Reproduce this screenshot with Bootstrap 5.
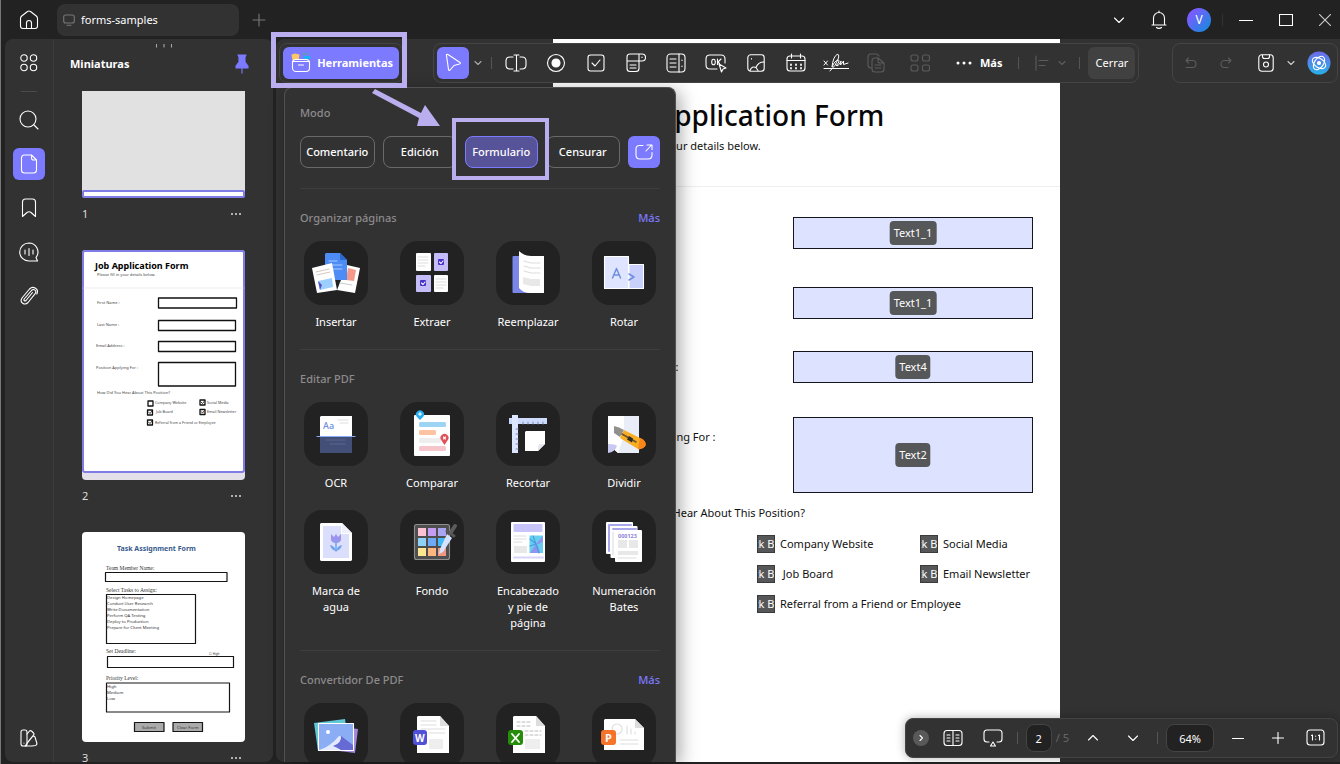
<!DOCTYPE html>
<html lang="es">
<head>
<meta charset="utf-8">
<meta name="viewport" content="width=device-width, initial-scale=1">
<title>forms-samples</title>
<link href="https://cdn.jsdelivr.net/npm/bootstrap@5.3.0/dist/css/bootstrap.min.css" rel="stylesheet">
<style>
:root{--ink:#222;--pane:#333233;--line:#454445;--violet:#7c7aff;--mark-line:#baaeef}
body{font-family:"Noto Sans","Open Sans",sans-serif;font-size:11px;line-height:16px;color:#fff;background:var(--ink)}
.app{height:100vh;padding:0 0 2px 4px;border-left:1px solid #777;overflow:hidden}
svg{display:block;fill:none;stroke:#fff;stroke-width:1.1;stroke-linecap:round;stroke-linejoin:round}
.tool{width:40px;height:32px;padding:0;border:0;border-radius:6px;display:flex;align-items:center;justify-content:center;flex:none;color:#fff;font-size:11px;line-height:16px}
.tool-s{width:18px}
.tool-xs{width:10px}
.tool-m{width:30px}
.tool-first{width:24px}
.tool-last{width:36px}
.tool-on,.tool-on:hover{background:var(--violet);width:32px}
.faint svg{stroke:#5c5c5c}
.vsep{width:1px;height:12px;background:#555;flex:none}
.vsep-win{margin:0 3px;background:#333}
.vsep-end{margin:0 8px 0 12px}
.titlebar{height:39px;flex:none}
.doc-tab{width:182px;height:32px;border-radius:8px;background:var(--pane);padding:0 6px;margin-left:8px;gap:6px}
.doc-tab svg,.plus svg{stroke:#777}
.avatar{width:24px;height:24px;border-radius:50%;background:linear-gradient(135deg,#7a5cff 20%,#1f86e0 85%);font-size:12px;line-height:24px;text-align:center}
.rail{width:49px;background:var(--pane);border-right:1px solid #3c3b3c;border-radius:8px 0 0 8px;padding:8px 0}
.rail .tool{width:32px}
.rail-line{width:16px;height:1px;background:#4b4b4b;margin:12px 0}
.rail .gap-top{margin-top:12px}
.thumbs{width:219px;background:var(--pane);border-radius:0 8px 8px 0;overflow:hidden;padding:0 28px}
.thumb-head{height:52px;margin:0 -12px;padding-bottom:3px}
.grip{left:101px;top:5px}
.thumb svg{width:163px;stroke:none}
.thumb-cap{height:52px;padding:8px 3px 0 0;color:#ddd}
.workspace{margin-left:3px}
.canvas{background:var(--pane);overflow:hidden;border-radius:8px 0 0 8px;padding-right:3px}
.sheet{width:507px;background:#fff;color:#111;padding:58px 27px 0 47px;min-height:100%}
.sheet h1{font-size:28px;line-height:36px;font-weight:500;margin:0 0 5px 6px;white-space:nowrap;color:#080808}
.sheet hr{margin:32px -27px 30px -47px;border-color:#bbb}
.frow{display:flex;align-items:flex-start;margin-bottom:34px}
.frow:nth-of-type(1){margin-bottom:38px}
.frow:nth-of-type(2){margin-bottom:32px}
.frow>label{padding-top:8px;white-space:nowrap}
.fbox{position:relative;width:240px;margin-left:auto}
.fbox input,.fbox textarea{display:block;width:100%;height:32px;border:1px solid #15151f;background:#dde2ff;resize:none}
.fbox textarea{height:76px}
.fchip{position:absolute;left:50%;top:50%;transform:translate(-50%,-50%);background:#565759;color:#fff;border-radius:4px;padding:4px;line-height:16px}
.ask{margin:-22px 0 14px 4px}
.checks{margin-left:157px;display:grid;grid-template-columns:163px 1fr;row-gap:12px}
.checks label{display:flex;align-items:center;white-space:nowrap;gap:5px}
.cbox{position:relative;flex:none;width:18px;height:18px;background:#565759;overflow:hidden;display:flex;justify-content:center;border:1px solid #3a3a3a;color:#fff}
.cbox span{flex:none;white-space:nowrap;margin-left:-12px}
.cbox input{position:absolute;inset:0;opacity:0}
.bars{top:4px;left:3px;right:2px}
.group{height:40px;border:1px solid var(--line);border-radius:8px;background:var(--pane);padding:0 3px}
.hot{position:relative}
.hot::before{content:"";position:absolute;inset:-15px -8px -9px -12px;border:5px solid var(--mark-line);pointer-events:none}
.btn-tools,.btn-tools:hover{width:116px;height:32px;border:0;border-radius:6px;background:var(--violet);color:#fff;font-size:11px;line-height:16px;font-weight:700;padding:0 6px 0 8px}
.btn-close-form,.btn-close-form:hover{width:47px;height:32px;padding:0;border:0;background:#424142;color:#fff;font-size:11px;border-radius:6px}
.menu{left:8px;top:48px;bottom:0;width:392px;padding:15px 15px 0;background:var(--pane);border:1px solid #525152;border-bottom:0;border-radius:8px 8px 0 0;overflow:hidden;box-shadow:4px 4px 18px rgba(0,0,0,.35)}
.menu h2{font-size:11px;line-height:20px;font-weight:500;color:#8c8b8c;margin:0 0 13px}
.menu h2 a{color:var(--violet);text-decoration:none}
.mode,.mode:hover{flex:1 1 0;min-width:0;height:32px;padding:0;border:1px solid #6b6a6b;border-radius:8px;color:#fff;font-size:11px;line-height:16px;font-weight:500}
.mode-wrap{flex:1 1 0;position:relative;display:flex}
.mode-wrap::before{content:"";position:absolute;inset:-18px -11px -12px -13px;border:4px solid var(--mark-line);background:var(--pane)}
.mode-on,.mode-on:hover{position:relative;background:#575398;border-color:var(--violet)}
.sect{border-top:1px solid #3f3e3f;padding:19px 0}
.tiles{display:grid;grid-template-columns:repeat(4,72px);justify-content:space-between;row-gap:19px}
.tile-btn,.tile-btn:hover{padding:0 3px;border:0;color:#fff;font-size:11px;line-height:16px;display:flex;flex-direction:column;align-items:center;gap:9px}
.tile-btn svg{width:64px;height:64px;flex:none;border-radius:18px;background:#232223;stroke:none}
.arrow{left:94px;top:48px}
.zoombar{right:2px;bottom:4px;background:var(--pane);box-shadow:0 0 10px rgba(0,0,0,.3)}
.num,.num:focus{height:28px;border:1px solid #444;border-radius:8px;background:#232223;color:#fff;text-align:center;padding:0}
.num-page{width:26px}
.num-zoom{width:48px}
.page-total{color:#666}
</style>
</head>
<body>
<div class="app d-flex flex-column">
<header class="titlebar d-flex align-items-center">
  <button class="btn tool ms-1" aria-label="Inicio"><svg width="20" height="20" viewBox="0 0 20 20"><path d="M1.500 8.500 Q1.500 7 2.700 6 L8.500 1.500 Q10 .6 11.500 1.500 L17.300 6 Q18.500 7 18.500 8.500 V16 Q18.500 18.500 16 18.500 H4 Q1.500 18.500 1.500 16Z M7.500 18 V13 a2.500 2.500 0 0 1 5 0 V18"/></svg></button>
  <div class="doc-tab d-flex align-items-center"><svg width="12" height="12" viewBox="0 0 12 12"><rect x=".7" y="1" width="10.600" height="8" rx="2"/><path d="M4 11.300h4"/></svg><span>forms-samples</span></div>
  <button class="btn tool plus" aria-label="Nueva pestaña"><svg width="14" height="14" viewBox="0 0 14 14"><path d="M7 1v12M1 7h12"/></svg></button>
  <div class="d-flex align-items-center ms-auto">
    <button class="btn tool" aria-label="Más opciones"><svg width="12" height="12" viewBox="0 0 12 12"><path d="M1.500 4 6 8.500 10.500 4"/></svg></button>
    <button class="btn tool" aria-label="Avisos"><svg width="16" height="20" viewBox="0 0 16 20"><path d="M1 15h14M2.500 15V8a5.500 5.500 0 0 1 11 0v7M8 2.500V1M5.500 17.500a3 2 0 0 0 5 0"/></svg></button>
    <button class="btn tool" aria-label="Cuenta"><span class="avatar">V</span></button>
    <span class="vsep vsep-win"></span>
    <button class="btn tool" aria-label="Minimizar"><svg width="14" height="14" viewBox="0 0 14 14"><path d="M0 7.500h14"/></svg></button>
    <button class="btn tool me-1" aria-label="Maximizar"><svg width="14" height="14" viewBox="0 0 14 14"><path d="M.5 1.500h13v11H.5z" stroke-linejoin="miter"/></svg></button>
    <button class="btn tool tool-m" aria-label="Cerrar ventana"><svg width="12" height="12" viewBox="0 0 12 12"><path d="M0 0l12 12M12 0 0 12" stroke="#ccc"/></svg></button>
  </div>
</header>

<div class="d-flex flex-grow-1" style="min-height:0">
  <nav class="rail d-flex flex-column align-items-center flex-shrink-0" aria-label="Paneles">
    <button class="btn tool" aria-label="Vistas"><svg width="18" height="18" viewBox="0 0 18 18"><circle cx="4" cy="4" r="3.200"/><circle cx="13.500" cy="4" r="3.200"/><circle cx="4" cy="13.500" r="3.200"/><circle cx="13.500" cy="13.500" r="3.200"/></svg></button>
    <span class="rail-line"></span>
    <button class="btn tool" aria-label="Buscar"><svg width="20" height="20" viewBox="0 0 20 20"><circle cx="9" cy="9" r="8"/><path d="m15 15 4 4"/></svg></button>
    <button class="btn tool tool-on gap-top mb-2" aria-label="Miniaturas"><svg width="18" height="20" viewBox="0 0 18 20"><path d="M11.500 1H4.500Q1.500 1 1.500 4v12q0 3 3 3h9q3 0 3-3V6zL11.500 4q0 2 2 2h3"/></svg></button>
    <button class="btn tool mt-1" aria-label="Marcadores"><svg width="16" height="20" viewBox="0 0 16 20"><path d="M1.500 18.500V4q0-3 3-3h7q3 0 3 3v14.500l-4.500-4q-2-1.500-4 0z"/></svg></button>
    <button class="btn tool gap-top" aria-label="Comentarios"><svg width="20" height="20" viewBox="0 0 20 20"><path d="M10 1a9.300 9 0 1 0 0 18h8.500l-1.500-3.500A9 9 0 0 0 10 1zM6 8v4M10 6.500v7M14 8v4"/></svg></button>
    <button class="btn tool gap-top" aria-label="Adjuntos"><svg width="18" height="20" viewBox="0 0 18 20" stroke-width="1"><path d="M12.500 6.500 6 14.500q-.8.8-1.600.2t-.2-1.700L11.500 4.500q1.700-1.700 3.400-.4t.3 3.600L8 16.500q-2.500 2.500-5.300.7t-.7-5.200L9.500 3q2.800-2.800 6-.8t1.300 5.800"/></svg></button>
    <button class="btn tool mt-auto" aria-label="Temas"><svg width="18" height="18" viewBox="0 0 18 18"><rect x="1" y="1" width="6" height="16" rx="2"/><path d="M7 5l2.500-3Q10.500 1.200 11.500 2l2 2q1 1 0 2L7 14M13 7q1.500 0 2 1l1.800 6q.5 2-1.500 2.500L12 17H5L13 7M4 14v.1"/></svg></button>
  </nav>

  <aside class="thumbs flex-shrink-0 position-relative">
    <svg class="grip position-absolute" width="18" height="4" viewBox="0 0 18 4" style="stroke:#aaa"><path d="M1.500 .5v2.500M9 .5v2.500M16.500 .5v2.500"/></svg>
    <div class="thumb-head d-flex align-items-center justify-content-between">
      <strong class="fw-bold">Miniaturas</strong>
      <button class="btn tool tool-s me-1" aria-label="Fijar"><svg class="me-1" width="14" height="20" viewBox="0 0 14 20" style="fill:#7c7aff;stroke:#7c7aff"><path d="M3 1h8l-1 2v5l3 4v2H1v-2l3-4V3zM7 14v5" /></svg></button>
    </div>
    <div class="thumb">
      <svg height="107" viewBox="0 0 163 107"><path d="M0 0h163v103q0 4-4 4H4q-4 0-4-4z" fill="#e1e1e1"/><rect x="1" y="100" width="161" height="6" rx="1" fill="#fff" stroke="#7f7ce8" stroke-width="2"/></svg>
      <div class="thumb-cap d-flex justify-content-between"><span>1</span><svg width="12" height="16" viewBox="0 0 12 16" style="width:12px;fill:#ddd"><circle cx="2" cy="8" r="1"/><circle cx="6" cy="8" r="1"/><circle cx="10" cy="8" r="1"/></svg></div>
    </div>
    <div class="thumb">
      <svg height="230" viewBox="0 0 163 230"><rect width="163" height="230" rx="4" fill="#e3e0ea"/><rect x="1" y="1" width="161" height="221" rx="2" fill="#fff" stroke="#7f7ce8" stroke-width="2"/><path d="M2 38h159" stroke="#eee"/>
      <g fill="#444" font-size="4"><text x="13" y="19" font-size="9" font-weight="700" fill="#000">Job Application Form</text><text x="15" y="26">Please fill in your details below.</text><text x="15" y="54">First Name :</text><text x="15" y="76">Last Name :</text><text x="14" y="97">Email Address :</text><text x="14" y="119">Position Applying For :</text><text x="15" y="144">How Did You Hear About This Position?</text><text x="73" y="154" font-size="3.700">Company Website</text><text x="125" y="154" font-size="3.700">Social Media</text><text x="74" y="163" font-size="3.700">Job Board</text><text x="125" y="163" font-size="3.700">Email Newsletter</text><text x="73" y="174" font-size="3.700">Referral from a Friend or Employee</text></g>
      <g stroke="#111" stroke-width="1.300" fill="#fff"><path d="M76.500 48h78v10h-78zM76.500 70.500h77v10h-77zM76.500 91.500h77v10h-77zM76.500 112.500h77v23.500h-77z" fill="none"/><path d="M66 151h5v5h-5zM118 150h5v5h-5zM65.500 160h5v5h-5zM118 159.500h5v5h-5zM65.500 170h5v5h-5z"/><path d="m119 152 1.500 1.500 2-2.500M66.500 162l1.500 1.500 2-2.500M119 161.500l1.500 1.500 2-2.500M66.500 172l1.500 1.500 2-2.500" stroke-width=".8"/></g></svg>
      <div class="thumb-cap d-flex justify-content-between"><span>2</span><svg width="12" height="16" viewBox="0 0 12 16" style="width:12px;fill:#ddd"><circle cx="2" cy="8" r="1"/><circle cx="6" cy="8" r="1"/><circle cx="10" cy="8" r="1"/></svg></div>
    </div>
    <div class="thumb">
      <svg height="210" viewBox="0 0 163 210"><rect width="163" height="210" rx="4" fill="#fff"/><text x="35" y="19" font-size="7" font-weight="700" fill="#385a8c">Task Assignment Form</text>
      <g fill="#333" font-size="5.500" font-family="Liberation Serif,serif"><text x="24" y="38">Team Member Name:</text><text x="24" y="60">Select Tasks to Assign:</text><text x="24" y="121">Set Deadline:</text><text x="24" y="148">Priority Level:</text></g>
      <g stroke="#151515" stroke-width="1.200" fill="none"><path d="M23.500 40.500h121.500v9h-121.500zM24.500 62.500h89v49h-89zM25.500 124.500h126v11h-126zM24.500 151h123v29h-123z"/><path fill="#aaa" d="M52.500 190.500h29.500v9h-29.500zM91 190.500h29.500v9h-29.500z"/></g>
      <g fill="#333" font-size="4.200"><text x="25" y="67">Design Homepage</text><text x="25" y="73">Conduct User Research</text><text x="25" y="79">Write Documentation</text><text x="25" y="85">Perform QA Testing</text><text x="25" y="91">Deploy to Production</text><text x="25" y="97">Prepare for Client Meeting</text><text x="25" y="156">High</text><text x="25" y="162">Medium</text><text x="25" y="168">Low</text><text x="127" y="123" font-size="3">☐ High</text><text x="60" y="197">Submit</text><text x="95" y="197">Clear Form</text></g></svg>
      <div class="thumb-cap d-flex justify-content-between"><span>3</span><svg width="12" height="16" viewBox="0 0 12 16" style="width:12px;fill:#ddd"><circle cx="2" cy="8" r="1"/><circle cx="6" cy="8" r="1"/><circle cx="10" cy="8" r="1"/></svg></div>
    </div>
  </aside>

  <main class="workspace flex-grow-1 position-relative">
    <div class="canvas h-100">
      <form class="sheet mx-auto">
        <h1>Job Application Form</h1>
        <p class="m-0">Please fill in your details below.</p>
        <hr>
        <div class="frow"><label for="fn">First Name :</label><div class="fbox"><input id="fn" type="text"><span class="fchip">Text1_1</span></div></div>
        <div class="frow"><label for="ln">Last Name :</label><div class="fbox"><input id="ln" type="text"><span class="fchip">Text1_1</span></div></div>
        <div class="frow"><label for="em">Email Address :</label><div class="fbox"><input id="em" type="text"><span class="fchip">Text4</span></div></div>
        <div class="frow"><label class="pt-2 mt-1" for="po">Position Applying For :</label><div class="fbox"><textarea id="po"></textarea><span class="fchip">Text2</span></div></div>
        <p class="ask">How Did You Hear About This Position?</p>
        <div class="checks">
          <label><span class="cbox"><input type="checkbox"><span>Check Box</span></span>Company Website</label>
          <label><span class="cbox"><input type="checkbox" checked><span>Check Box</span></span>Social Media</label>
          <label><span class="cbox"><input type="checkbox" checked><span>Check Box</span></span>&nbsp;Job Board</label>
          <label><span class="cbox"><input type="checkbox" checked><span>Check Box</span></span>Email Newsletter</label>
          <label><span class="cbox"><input type="checkbox" checked><span>Check Box</span></span>Referral from a Friend or Employee</label>
        </div>
      </form>
    </div>

    <div class="menu position-absolute">
      <h2>Modo</h2>
      <div class="d-flex gap-2 mb-3 pb-1">
        <button class="btn mode">Comentario</button>
        <button class="btn mode">Edición</button>
        <span class="mode-wrap"><button class="btn mode mode-on">Formulario</button></span>
        <button class="btn mode">Censurar</button>
        <button class="btn tool tool-on" aria-label="Abrir en ventana"><svg width="18" height="16" viewBox="0 0 18 16"><path d="M8 1.500H4.500Q1 1.500 1 5v6q0 4 4 4h8q4 0 4-4V8.500M11 7l5.500-6M12 1h5v4.500"/></svg></button>
      </div>
      <section class="sect"><h2 class="d-flex justify-content-between"><span>Organizar páginas</span><a href="#">Más</a></h2>
        <div class="tiles">
          <button class="btn tile-btn"><svg viewBox="0 0 64 64"><path d="m43 24 13 3-5 25-18-3z" fill="#fff"/><path d="m44 27 8 2-2 11-8-1z" fill="#f4988a"/><path d="m36 42 12 2" stroke="#ccc"/><path d="M22 12h14l7 7v20H21V13z" fill="#4d8cf5"/><path d="m36 12 7 7h-7z" fill="#2c68cf"/><path d="M25 20h8M25 24h13M25 28h13" stroke="#a9caff"/><path d="m8 27 20-5 5 27-20 3z" fill="#fff"/><path d="m12 31 13-3M13 34l13-3" stroke="#d8c8bd"/><path d="m14 40 14-3 1 9-13 3z" fill="#9ccfff"/><path d="m14 40 4 4-2 5z" fill="#5450c5"/></svg>Insertar</button>
          <button class="btn tile-btn"><svg viewBox="0 0 64 64"><rect x="16" y="12" width="15" height="18" rx="1" fill="#fff"/><rect x="34" y="12" width="14" height="18" rx="1" fill="#c5bdf7"/><rect x="16" y="34" width="15" height="17" rx="1" fill="#c5bdf7"/><rect x="34" y="34" width="14" height="17" rx="1" fill="#fff"/><path d="M18 16h10M18 19h10M18 22h10M18 25h7M36 38h10M36 41h10M36 44h10M36 47h7" stroke="#ddd"/><rect x="38" y="18" width="6" height="6" rx="1" fill="#4b30c9"/><rect x="20" y="39" width="6" height="6" rx="1" fill="#4b30c9"/><path d="m39.500 21 1.500 1.500 2-2.500M21.500 42l1.500 1.500 2-2.500" stroke="#fff"/></svg>Extraer</button>
          <button class="btn tile-btn"><svg viewBox="0 0 64 64"><rect x="16.500" y="15" width="30" height="37" rx="1" fill="#7b86ea"/><path d="M23 10q5 5 12 5h13v37H34q-7 0-11-5z" fill="#fff"/><path d="m28 20 7 2h9M28 25l7 2h9M28 30l7 2h9" stroke="#ddd"/><path d="m27 36 8 2h9v7h-9l-8-2z" fill="#e8e8e8"/></svg>Reemplazar</button>
          <button class="btn tile-btn"><svg viewBox="0 0 64 64"><rect x="12.500" y="15.500" width="24" height="32" fill="#dfe5ff" stroke="#fff"/><path d="M37 23.500h14.500v24H37z" fill="#c8d0fb" stroke="#fff"/><path d="m20.500 37 4-9.500 4 9.500M22 34h5" stroke="#6f8fdf" stroke-width="1.500"/><path d="m37 33 5 3-5 3" stroke="#6f8fdf" stroke-width="1.500"/></svg>Rotar</button>
        </div></section>
      <section class="sect"><h2>Editar PDF</h2>
        <div class="tiles">
          <button class="btn tile-btn"><svg viewBox="0 0 64 64"><path d="M17 14h31v20H16V15z" fill="#fff"/><path d="M16 35h32v16H16z" fill="#444f77"/><path d="M13 34.500h38" stroke="#8baaf5"/><path d="M34 18h10M36 21h8" stroke="#ddd"/><path d="M22 38h19M26 42h15" stroke="#596792"/><text x="19" y="27" font-size="9" font-weight="500" fill="#6d8ddc">Aa</text></svg>OCR</button>
          <button class="btn tile-btn"><svg viewBox="0 0 64 64"><rect x="14" y="13" width="36" height="41" rx="1" fill="#fff"/><rect x="19" y="20" width="27" height="5" rx="1.500" fill="#9ed4f3"/><rect x="19" y="28" width="17" height="5" rx="1.500" fill="#fcc3a2"/><rect x="19" y="36" width="22" height="5" rx="1.500" fill="#eee"/><rect x="19" y="44" width="27" height="5" rx="1.500" fill="#f7c6cd"/><path d="M20 18l-3-3a4 4 0 1 1 6 0z" fill="#27aef0"/><path d="m44.500 43-3-4.500a4 4 0 1 1 6 0z" fill="#e25058"/><path d="M20 10.500v3M18.500 12h3M43.500 35l2 2m0-2-2 2" stroke="#fff"/></svg>Comparar</button>
          <button class="btn tile-btn"><svg viewBox="0 0 64 64"><path d="M13 16h38v6H13z" fill="#cddafb"/><path d="M16 13h6v38h-6z" fill="#dce6ff"/><path d="M27 22v-2M32 22v-2M37 22v-2M42 22v-2M47 22v-2M22 27h-2M22 32h-2M22 37h-2M22 42h-2M22 47h-2" stroke="#7b8db8"/><path d="M30 29h19v13l-7 7H29V30z" fill="#fff"/><path d="M49 42h-5q-1 0-2 2v5z" fill="#e6e8ef"/></svg>Recortar</button>
          <button class="btn tile-btn"><svg viewBox="0 0 64 64"><path d="M16 14h31v37H26L16 42z" fill="#e9edf8"/><path d="M16 14h16v20l-6 17L16 42z" fill="#fff"/><path d="M16 42q8 0 9 2-2 6-9 7z" fill="#c9c8f1"/><path d="M22 24q5 1 10 4l-4 7-6-4z" fill="#92908d"/><path d="m32 28 18 9q4 3 3 7-3 4-7 3L28 36z" fill="#f7ad24"/><path d="m48 36 3 1.500q4 3 2.500 6.500-3 4-7.500 3z" fill="#f98617"/><path d="m30 32 14 8" stroke="#6b532b" stroke-width="1.500"/><path d="m37 34 4 2.500-1 4-5-3z" fill="#2f2c28"/></svg>Dividir</button>
          <button class="btn tile-btn"><svg viewBox="0 0 64 64"><path d="M17 13h21l10 10v27l-1 1H17l-1-1V14z" fill="#fff"/><path d="M19 16h18v8h8v24H19z" fill="#dcdffb"/><path d="m38 13 10 10H38z" fill="#f0f0fa"/><path d="m27 24 3 3 2-3 2 3 3-3v6q-1 3-5 3t-5-3z" fill="#9c95ed"/><path d="M32 32v9" stroke="#72a4ec" stroke-width="1.500"/><path d="M26 35q1 5 6 6-1-5-6-6m12 0q-1 5-6 6 1-5 6-6" fill="#72a4ec"/></svg>Marca de agua</button>
          <button class="btn tile-btn"><svg viewBox="0 0 64 64"><rect x="14.500" y="14.500" width="35" height="35" rx="2" fill="#4e4e4e" stroke="#8f8f8f"/><path fill="#fac2d3" d="M18 18h8v8h-8z"/><path fill="#c49cf2" d="M28 18h8v8h-8z"/><path fill="#aaa5f2" d="M38 18h8v8h-8z"/><path fill="#8ed2f5" d="M18 28h8v8h-8z"/><path fill="#6ea9f5" d="M28 28h8v8h-8z"/><path fill="#45b9f7" d="M38 28h8v8h-8z"/><path fill="#fce68f" d="M18 38h8v8h-8z"/><path fill="#fdb77e" d="M28 38h8v8h-8z"/><path fill="#f29583" d="M38 38h8v8h-8z"/><path d="m47 24 5 4-9 14-4 2 1-5z" fill="#d4e3ff"/><path d="m47 21 7 5" stroke="#555" stroke-width="3"/><path d="m51 22 4-6" stroke="#5c5c5c" stroke-width="4"/></svg>Fondo</button>
          <button class="btn tile-btn"><svg viewBox="0 0 64 64"><rect x="15" y="12" width="34" height="40" rx="1" fill="#fff"/><rect x="17.500" y="14" width="29" height="8" rx="1" fill="#c8c5fa"/><path d="M18 26h12M18 29h12M18 32h8" stroke="#ddd"/><path d="M18 36h13v7H18z" fill="#e8e8e8"/><path d="M33.500 25.500h13.500v17.500H33.500z" fill="#66cfee"/><path d="m34 43 6-9 7-8v6l-7 3 7 3-5-2 2 7z" fill="#8f95ee"/><path d="m40 34-6-5M40 34l-3-8M40 34l3 9M40 34l-6 2" stroke="#4a9ae2"/><path d="M18 47.500h29" stroke="#d8d4fb" stroke-width="2"/></svg>Encabezado y pie de página</button>
          <button class="btn tile-btn"><svg viewBox="0 0 64 64"><rect x="14" y="12" width="27" height="32" rx="1" fill="#fff"/><path d="M17 15h22M17 15v26" stroke="#aaa6eb" stroke-width="2"/><rect x="18.500" y="16" width="27" height="32" rx="1" fill="#fff"/><path d="M21 19h23" stroke="#aaa6eb" stroke-width="2"/><path d="M21 22v23" stroke="#ddd"/><rect x="23" y="20" width="27" height="32" rx="1" fill="#fff"/><text x="26" y="27.500" font-size="5.500" font-weight="700" fill="#8d82d8">000123</text><path d="M26 30h9v8h-9zM37 30h9v8h-9zM26 41h20v4H26z" fill="#e8e8e8"/><path d="M26 48h18" stroke="#ddd"/></svg>Numeración Bates</button>
        </div></section>
      <section class="sect"><h2 class="d-flex justify-content-between"><span>Convertidor De PDF</span><a href="#">Más</a></h2>
        <div class="tiles">
          <button class="btn tile-btn" aria-label="PDF a imagen"><svg viewBox="0 0 64 64"><path d="m10 20 31-4 4 28-31 4z" fill="#62c7d4"/><path d="m22 22 32 4-3 24-32-4z" fill="#a487dc"/><rect x="14.500" y="20.500" width="35" height="27" fill="#8badf4" stroke="#fff"/><circle cx="24" cy="29" r="2" fill="#fff"/><path d="M15 47q11-3 20-14 2 0 3 2-3 3-1 12z" fill="#e3eaff"/><path d="M37 47q-5-3-8-4 9-3 8-10l12 9v5z" fill="#666ad5"/></svg></button>
          <button class="btn tile-btn" aria-label="PDF a Word"><svg viewBox="0 0 64 64"><path d="M18 13h22l9 10v27H17V14z" fill="#fff"/><path d="M40 13v10h9z" fill="#ddd"/><path d="M21 18h15M21 22h15M21 26h24M29 30h16" stroke="#ddd"/><path d="M29 36h14v10H29z" fill="#eee"/><rect x="13" y="27" width="14" height="15" rx="3" fill="#4f51d8"/><text x="15" y="38.500" font-size="10" font-weight="700" fill="#fff">W</text></svg></button>
          <button class="btn tile-btn" aria-label="PDF a Excel"><svg viewBox="0 0 64 64"><path d="M18 13h22l9 10v27H17V14z" fill="#fff"/><path d="M40 13v10h9z" fill="#ddd"/><path d="M21 19h15M21 23h15M29 28h16M29 32h16" stroke="#bbb" stroke-dasharray="3 2"/><path d="M29 36h15v10H29z" fill="#eee"/><rect x="12" y="27" width="15" height="15" rx="3" fill="#268d0a"/><path d="m16 31 7 8m0-8-7 8" stroke="#fff" stroke-width="1.800"/></svg></button>
          <button class="btn tile-btn" aria-label="PDF a PowerPoint"><svg viewBox="0 0 64 64"><path d="M13 16h30l9 9v22H12V17z" fill="#fff"/><path d="M43 16v9h9z" fill="#ddd"/><circle cx="25" cy="26" r="5" stroke="#ddd"/><path d="M35 23v8M39 26v5M43 29v2M28 37h18M28 41h18" stroke="#ddd"/><rect x="9" y="27" width="15" height="15" rx="3" fill="#f5742a"/><text x="13" y="38.500" font-size="11" font-weight="700" fill="#fff">P</text></svg></button>
        </div></section>
    </div>

    <div class="bars position-absolute d-flex">
      <div class="group d-flex align-items-center"><span class="hot d-block"><button class="btn btn-tools d-flex align-items-center justify-content-between"><svg width="20" height="20" viewBox="0 0 20 20"><path d="m1 2 3-1 4 1-1 5H2z" fill="#ffc766" stroke="#ffc766"/><path d="M12 1h4" stroke="#3cb878"/><path d="M14 4.500h4" stroke="#16b4f5" stroke-width="3"/><rect x="1.500" y="6.500" width="17" height="12" rx="3.500" fill="#7c7aff"/><path d="M1.500 8.500h17M7.500 12h5"/></svg>Herramientas</button></span></div>
      <div class="group d-flex align-items-center" style="margin-left:30px">
        <button class="btn tool tool-on" aria-label="Seleccionar"><svg width="18" height="20" viewBox="0 0 18 20"><path d="M2.500 1.500q.5-.5 1.500 0l12 8q1 1-.5 1.500l-5.500 1.500-4 4.500q-1 1-1.500-.5l-2-14z"/></svg></button>
        <button class="btn tool tool-s" aria-label="Opciones de selección"><svg width="8" height="6" viewBox="0 0 8 6"><path d="m1 1.500 3 3 3-3" stroke="#aaa"/></svg></button>
        <span class="vsep mx-1"></span>
        <button class="btn tool" aria-label="Campo de texto"><svg width="22" height="18" viewBox="0 0 22 18"><path d="M8 3H5Q1 3 1 7v4q0 4 4 4h3M15 3h2q4 0 4 4v4q0 4-4 4h-2M11.500 1.500v15M9 1h5M9 17h5"/></svg></button>
        <button class="btn tool" aria-label="Botón de opción"><svg width="20" height="20" viewBox="0 0 20 20"><circle cx="10" cy="10" r="8.500"/><circle cx="10" cy="10" r="4" fill="#fff"/></svg></button>
        <button class="btn tool" aria-label="Casilla"><svg width="18" height="18" viewBox="0 0 18 18"><rect x="1" y="1" width="16" height="16" rx="2.500"/><path d="m5 9 3 3 5-6"/></svg></button>
        <button class="btn tool" aria-label="Lista desplegable"><svg width="20" height="20" viewBox="0 0 20 20"><path d="M13 8v7.500q0 3-3 3H4q-3 0-3-3V4q0-3 3-3h12a3.500 3.500 0 0 1 0 7H1M13 1v7M4 12h6M4 15h6M16 4v.5"/></svg></button>
        <button class="btn tool" aria-label="Cuadro de lista"><svg width="20" height="20" viewBox="0 0 20 20"><rect x="1" y="1" width="18" height="18" rx="3.500"/><path d="M13 1v18M4 6h6M4 10h6M4 14h6M16 7v.5M16 13v.5"/></svg></button>
        <button class="btn tool" aria-label="Botón"><svg width="22" height="20" viewBox="0 0 22 20"><path d="M12 16H5q-4 0-4-4V6q0-4 4-4h11q4 0 4 4v4"/><ellipse cx="8.500" cy="9" rx="1.800" ry="2.800"/><path d="M12.500 6v5.500M16 6l-3 3 1.500 1.500M14 11l7 4-3 1-1.500 3z"/></svg></button>
        <button class="btn tool" aria-label="Imagen"><svg width="18" height="18" viewBox="0 0 18 18"><rect x=".8" y=".8" width="16.400" height="16.400" rx="3"/><path d="M4.500 4.500v.5M3 16.500q2-5 6-3l2 3M9 13.500Q11 8 17 8"/></svg></button>
        <button class="btn tool" aria-label="Fecha"><svg width="20" height="20" viewBox="0 0 20 20"><rect x="1" y="3" width="18" height="15" rx="3"/><path d="M1 7.500h18M5.500 1v4M14.500 1v4"/><path d="M5 11.500v.5M10 11.500v.5M15 11.500v.5M5 15v.5M10 15v.5M15 15v.5" stroke-width="1.800"/></svg></button>
        <button class="btn tool" aria-label="Firma"><svg width="26" height="20" viewBox="0 0 26 20"><path d="M1 8l3.500 4M4.500 8 1 12M1 15.500h25M7 18Q13 13 15.500 5q.8-4.500-1.500-3.500Q10 4 9 14q2-5 4.500-6.500t2.500.5q-.5 3-3 4.500 2 1.500 4-2.500l1-2-.5 4 3-4v3.500l4.500-1.500" stroke-width="1"/></svg></button>
        <span class="faint d-flex"><button class="btn tool" aria-label="Duplicar"><svg width="18" height="20" viewBox="0 0 18 20"><path d="M4 15Q1 15 1 12V4q0-3 3-3h5q2 0 3 2M11 5H8Q5 5 5 8v8q0 3 3 3h6q3 0 3-3V10zV8q0 2 2 2h4M8 12h6M8 15h6"/></svg></button>
        <button class="btn tool ms-1" aria-label="Organizar campos"><svg width="20" height="18" viewBox="0 0 20 18"><rect x="1" y="1" width="7" height="6" rx="2"/><rect x="12.500" y="1" width="7" height="6" rx="2"/><rect x="1" y="11" width="7" height="6" rx="2"/><rect x="12.500" y="11" width="7" height="6" rx="2"/></svg></button></span>
        <button class="btn tool fw-bold gap-2 px-3 w-auto"><svg width="16" height="4" viewBox="0 0 16 4" style="fill:#fff;stroke:none"><circle cx="2" cy="2" r="1.500"/><circle cx="8" cy="2" r="1.500"/><circle cx="14" cy="2" r="1.500"/></svg>Más</button>
        <span class="vsep"></span>
        <span class="faint d-flex ms-2"><button class="btn tool w-auto px-2" aria-label="Alinear"><svg width="14" height="16" viewBox="0 0 14 16"><path d="M1 1v14M4 5.500h9M4 10.500h6"/></svg></button>
        <button class="btn tool tool-xs" aria-label="Opciones de alineación"><svg width="8" height="6" viewBox="0 0 8 6"><path d="m1 1.500 3 3 3-3"/></svg></button></span>
        <span class="vsep vsep-end"></span>
        <button class="btn btn-close-form">Cerrar</button>
      </div>
      <div class="group d-flex align-items-center ms-auto">
        <span class="faint d-flex"><button class="btn tool tool-m" aria-label="Deshacer"><svg width="12" height="12" viewBox="0 0 12 12"><path d="M3.500 1 1 3.500 3.500 6M1 3.500h6.500a3.500 3.500 0 0 1 0 7H1"/></svg></button>
        <button class="btn tool" aria-label="Rehacer"><svg width="12" height="12" viewBox="0 0 12 12"><path d="M8.500 1 11 3.500 8.500 6M11 3.500H4.500a3.500 3.500 0 0 0 0 7H8"/></svg></button></span>
        <button class="btn tool" aria-label="Guardar"><svg width="16" height="18" viewBox="0 0 16 18"><rect x=".8" y=".8" width="14.400" height="16.400" rx="3"/><path d="M4.500 1v1.500q0 2 2 2h3q2 0 2-2V1"/><circle cx="8" cy="10.500" r="2.500"/></svg></button>
        <button class="btn tool tool-xs me-2" aria-label="Opciones de guardado"><svg width="8" height="6" viewBox="0 0 8 6"><path d="m1 1.500 3 3 3-3" stroke="#ccc"/></svg></button>
        <button class="btn tool tool-m" aria-label="Asistente"><svg width="24" height="24" viewBox="0 0 24 24"><defs><linearGradient id="ai" x2="0" y2="1"><stop stop-color="#6d6bea"/><stop offset="1" stop-color="#28b0e8"/></linearGradient></defs><circle cx="12" cy="12" r="11.500" fill="url(#ai)" stroke="none"/><ellipse cx="12" cy="12" rx="7.500" ry="4.500" transform="rotate(35 12 12)"/><ellipse cx="12" cy="12" rx="7.500" ry="4.500" transform="rotate(125 12 12)"/><circle cx="12" cy="12" r="1.500" fill="#fff"/></svg></button>
      </div>
    </div>

    <svg class="arrow position-absolute" width="74" height="42" viewBox="0 0 74 42" style="stroke:none" aria-hidden="true"><path d="m5 2 46 24 4-8 15 21H47l2-8L2 6z" fill="#baaeef"/></svg>

    <div class="zoombar group position-absolute d-flex align-items-center">
      <button class="btn tool tool-first" aria-label="Contraer barra"><svg width="16" height="16" viewBox="0 0 16 16"><circle cx="8" cy="8" r="8" fill="#5a595a" stroke="none"/><path d="m7 5.500 2.500 2.500L7 10.500"/></svg></button>
      <button class="btn tool" aria-label="Vista de páginas"><svg width="20" height="18" viewBox="0 0 20 18"><rect x="1" y="1.500" width="18" height="15" rx="3"/><path d="M10 1.500v15M4 6h3M4 9h3M4 12h3M13 6h3M13 9h3M13 12h3"/></svg></button>
      <button class="btn tool" aria-label="Presentación"><svg width="20" height="18" viewBox="0 0 20 18"><path d="M6 13H4q-3 0-3-3V4q0-3 3-3h12q3 0 3 3v6q0 3-3 3h-2M10 13l2.500 4h-5z"/></svg></button>
      <span class="vsep ms-1"></span>
      <input class="num num-page ms-2" value="2" aria-label="Página"><span class="page-total ms-1">/ 5</span>
      <button class="btn tool ms-1" aria-label="Página anterior"><svg width="12" height="12" viewBox="0 0 12 12"><path d="M1.500 8 6 3.500 10.500 8"/></svg></button>
      <button class="btn tool" aria-label="Página siguiente"><svg width="12" height="12" viewBox="0 0 12 12"><path d="M1.500 4 6 8.500 10.500 4"/></svg></button>
      <span class="vsep ms-1"></span>
      <input class="num num-zoom ms-2" value="64%" aria-label="Zoom">
      <button class="btn tool ms-1" aria-label="Alejar"><svg width="12" height="12" viewBox="0 0 12 12"><path d="M.5 6.500h11"/></svg></button>
      <button class="btn tool" aria-label="Acercar"><svg width="12" height="12" viewBox="0 0 12 12"><path d="M.5 6h11M6 .5v11"/></svg></button>
      <button class="btn tool tool-last" aria-label="Tamaño real"><svg width="20" height="18" viewBox="0 0 20 18"><rect x="1" y="1" width="17" height="15" rx="3"/><path d="M5.500 6.500 6.500 6v5M12.500 6.500l1-.5v5M9.700 7v.3M9.700 10v.3"/></svg></button>
    </div>
  </main>
</div>
</div>
<script src="https://cdn.jsdelivr.net/npm/bootstrap@5.3.0/dist/js/bootstrap.bundle.min.js"></script>
</body>
</html>
